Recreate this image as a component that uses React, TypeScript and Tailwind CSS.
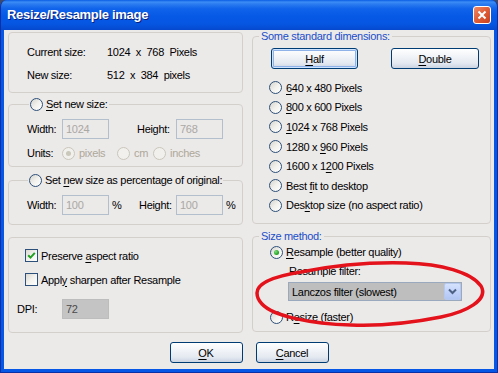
import React from "react";

type Kids = { children?: React.ReactNode };

function U({ children }: Kids) {
  return <span className="underline decoration-[1px] underline-offset-[2px]">{children}</span>;
}

function Radio({ checked = false, disabled = false }: { checked?: boolean; disabled?: boolean }) {
  return (
    <span
      className={
        disabled
          ? "inline-flex shrink-0 w-[13px] h-[13px] rounded-full border border-[#C9C7BA] bg-[#F1F0EC] items-center justify-center"
          : "inline-flex shrink-0 w-[13px] h-[13px] rounded-full border border-[#2C5079] bg-[linear-gradient(135deg,#D6D4CC_0%,#F2F1ED_50%,#FFFFFF_100%)] items-center justify-center"
      }
    >
      {checked && (
        <span
          className={
            disabled
              ? "w-[5px] h-[5px] rounded-full bg-[#CAC8BB]"
              : "w-[5px] h-[5px] rounded-full bg-[radial-gradient(circle_at_35%_35%,#7BDD7B_0%,#27A827_60%,#1A7E1A_100%)]"
          }
        />
      )}
    </span>
  );
}

function Check({ checked = false }: { checked?: boolean }) {
  return (
    <span className="inline-flex shrink-0 w-[13px] h-[13px] border border-[#2C5079] bg-[linear-gradient(135deg,#DAD8D0_0%,#F3F2EE_50%,#FFFFFF_100%)] items-center justify-center">
      {checked && (
        <svg width="9" height="9" viewBox="0 0 9 9">
          <path d="M1.2 4.2 L3.5 6.6 L7.8 1.8" fill="none" stroke="#21A121" strokeWidth="2" />
        </svg>
      )}
    </span>
  );
}

function Btn({ children, focused = false, className = "" }: Kids & { focused?: boolean; className?: string }) {
  return (
    <div
      className={`h-[21px] shrink-0 rounded-[3px] border border-[#003C74] bg-[linear-gradient(to_bottom,#FFFFFF_0%,#F4F6F9_30%,#E4E9F1_75%,#CBD4E2_100%)] flex items-center justify-center text-black ${
        focused ? "shadow-[inset_0_0_0_1px_#CEE3FF,inset_0_0_0_2px_#8FB2E8]" : ""
      } ${className}`}
    >
      {children}
    </div>
  );
}

function Field({ value }: { value: string }) {
  return (
    <div className="w-[47px] h-[20px] shrink-0 border border-[#B3BFCD] bg-[#ECE9E9] text-[#A9A8A3] pl-[3px] flex items-center">
      {value}
    </div>
  );
}

function LeftCol() {
  return (
    <div className="w-[235px] shrink-0 flex flex-col">
      <div className="mt-[2px] h-[61px] border border-[#D3D0CC] rounded-[4px] pl-[18px] pt-[12px] flex flex-col gap-[9px]">
        <div className="flex h-[14px] items-center">
          <span className="w-[80px]">Current size:</span>
          <span className="whitespace-pre">1024  x  768  Pixels</span>
        </div>
        <div className="flex h-[14px] items-center">
          <span className="w-[80px]">New size:</span>
          <span className="whitespace-pre">512  x  384  pixels</span>
        </div>
      </div>

      <fieldset className="mt-[4px] border border-[#D3D0CC] rounded-[4px]">
        <legend className="ml-[20px] px-[1px]">
          <span className="flex items-center h-[14px] gap-[3px]">
            <Radio />
            <span>
              <U>S</U>et new size:
            </span>
          </span>
        </legend>
        <div className="pt-[8px] pb-[6px] flex flex-col">
          <div className="flex items-center h-[20px]">
            <span className="ml-[18px] w-[35px]">Width:</span>
            <Field value="1024" />
            <span className="ml-[28px] w-[39px]">Height:</span>
            <Field value="768" />
          </div>
          <div className="flex items-center h-[14px] mt-[7px]">
            <span className="ml-[18px] w-[35px]">Units:</span>
            <span className="flex items-center w-[55px] text-[#ACA899]">
              <Radio checked disabled />
              <span className="ml-[4px]">pixels</span>
            </span>
            <span className="flex items-center w-[36px] text-[#ACA899]">
              <Radio disabled />
              <span className="ml-[4px]">cm</span>
            </span>
            <span className="flex items-center text-[#ACA899]">
              <Radio disabled />
              <span className="ml-[4px]">inches</span>
            </span>
          </div>
        </div>
      </fieldset>

      <fieldset className="mt-[6px] border border-[#D3D0CC] rounded-[4px]">
        <legend className="ml-[19px] px-[1px]">
          <span className="flex items-center h-[14px] gap-[3px]">
            <Radio />
            <span>
              Set <U>n</U>ew size as percentage of original:
            </span>
          </span>
        </legend>
        <div className="pt-[8px] pb-[9px]">
          <div className="flex items-center h-[20px]">
            <span className="ml-[18px] w-[35px]">Width:</span>
            <Field value="100" />
            <span className="ml-[3px] w-[8px]">%</span>
            <span className="ml-[19px] w-[37px]">Height:</span>
            <Field value="100" />
            <span className="ml-[3px]">%</span>
          </div>
        </div>
      </fieldset>

      <div className="mt-[12px] border border-[#D3D0CC] rounded-[4px] pt-[11px] pb-[13px] flex flex-col">
        <div className="flex items-center h-[13px] ml-[16px]">
          <Check checked />
          <span className="ml-[3px]">
            Preserve <U>a</U>spect ratio
          </span>
        </div>
        <div className="flex items-center h-[13px] ml-[16px] mt-[11px]">
          <Check />
          <span className="ml-[3px]">
            Appl<U>y</U> sharpen after Resample
          </span>
        </div>
        <div className="flex items-center h-[20px] mt-[13px] ml-[8px]">
          <span className="w-[45px]">DPI:</span>
          <div className="w-[47px] h-[20px] border border-[#BDBDBD] bg-[#C4C4C4] text-[#4A4A4A] pl-[3px] flex items-center">
            72
          </div>
        </div>
      </div>
    </div>
  );
}

const sizes: React.ReactNode[] = [
  <>
    <U>6</U>40 x 480 Pixels
  </>,
  <>
    <U>8</U>00 x 600 Pixels
  </>,
  <>
    <U>1</U>024 x 768 Pixels
  </>,
  <>
    1280 x <U>9</U>60 Pixels
  </>,
  <>
    1600 x 1<U>2</U>00 Pixels
  </>,
  <>
    Best <U>f</U>it to desktop
  </>,
  <>
    Des<U>k</U>top size (no aspect ratio)
  </>,
];

function RightCol() {
  return (
    <div className="w-[239px] shrink-0 flex flex-col">
      <fieldset className="border border-[#D3D0CC] rounded-[4px]">
        <legend className="ml-[6px] px-[2px] text-[#1A4FC8] leading-[13px]">Some standard dimensions:</legend>
        <div className="pt-[5px] pb-[8px]">
          <div className="flex h-[21px]">
            <Btn focused className="ml-[18px] w-[87px]">
              <U>H</U>alf
            </Btn>
            <Btn className="ml-[33px] w-[88px]">
              <U>D</U>ouble
            </Btn>
          </div>
          <div className="mt-[9px] ml-[16px] flex flex-col">
            {sizes.map((s, i) => (
              <div key={i} className="h-[19.6px] flex items-center">
                <Radio />
                <span className="ml-[4px]">{s}</span>
              </div>
            ))}
          </div>
        </div>
      </fieldset>

      <fieldset className="mt-[6px] border border-[#D3D0CC] rounded-[4px]">
        <legend className="ml-[6px] px-[2px] text-[#1A4FC8] leading-[13px]">Size method:</legend>
        <div className="pt-[2px] pb-[7px] flex flex-col">
          <div className="flex items-center h-[14px] ml-[17px]">
            <Radio checked />
            <span className="ml-[3px]">
              <U>R</U>esample (better quality)
            </span>
          </div>
          <div className="h-[14px] mt-[5px] ml-[36px] flex items-center">Resample filter:</div>
          <div className="mt-[4px] ml-[35px] w-[174px] h-[19px] border border-[#9AA9BD] bg-[#BEBEBE] flex items-center">
            <span className="pl-[3px] flex-1 text-black">Lanczos filter (slowest)</span>
            <div className="w-[17px] h-[17px] rounded-[2px] border border-[#B5C8F0] bg-[linear-gradient(to_bottom,#D6E2FD_0%,#C2D3FA_50%,#B2C6F4_100%)] flex items-center justify-center">
              <svg width="9" height="7" viewBox="0 0 9 7">
                <path d="M1 1.5 L4.5 5 L8 1.5" fill="none" stroke="#4D6185" strokeWidth="2" />
              </svg>
            </div>
          </div>
          <div className="flex items-center h-[14px] mt-[9px] ml-[17px]">
            <Radio />
            <span className="ml-[3px]">
              R<U>e</U>size (faster)
            </span>
          </div>
        </div>
      </fieldset>
    </div>
  );
}

export default function App() {
  return (
    <div className="w-[498px] h-[373px] bg-[#3A4A70] font-['Liberation_Sans',Arial,sans-serif] text-[11px] leading-[14px] tracking-[-0.3px] text-black">
      <div className="relative w-full h-full flex flex-col rounded-t-[7px] overflow-hidden bg-[#0657E6] border-x border-b border-[#0B30A6]">
        <div className="h-[30px] shrink-0 flex items-center pl-[6px] pr-[6px] bg-[linear-gradient(to_bottom,#0A5DE5_0%,#3D8DF5_7%,#2A7AF1_14%,#0F62EA_30%,#0659E5_55%,#0656E2_80%,#0548CE_100%)]">
          <span className="text-white font-bold text-[13px] tracking-[-0.3px] [text-shadow:1px_1px_0_#0A1E7A]">
            Resize/Resample image
          </span>
          <div className="ml-auto w-[18px] h-[18px] rounded-[3px] border border-white bg-[linear-gradient(135deg,#F08A66_0%,#E0603A_45%,#C8401C_100%)] flex items-center justify-center">
            <svg width="10" height="10" viewBox="0 0 10 10">
              <path d="M1.5 1.5 L8.5 8.5 M8.5 1.5 L1.5 8.5" stroke="white" strokeWidth="2" />
            </svg>
          </div>
        </div>
        <div className="flex-1 mx-[3px] mb-[3px] bg-[#ECE9E9] flex flex-col">
          <div className="flex items-start px-[4px] gap-[9px]">
            <LeftCol />
            <RightCol />
          </div>
          <div className="flex justify-center gap-[13px] mt-[9px]">
            <Btn className="w-[73px]">
              <U>O</U>K
            </Btn>
            <Btn className="w-[73px]">
              <U>C</U>ancel
            </Btn>
          </div>
        </div>
        <svg className="absolute left-0 top-0 pointer-events-none" width="498" height="373">
          <path
            d="M 256 293 C 256 282, 275 276, 300 272 C 330 266, 370 262, 405 263 C 440 264, 470 272, 480 286 C 488 300, 465 312, 440 317 C 410 323, 375 326, 350 325 C 310 324, 272 316, 261 304 C 257 300, 256 296, 256 293 Z"
            fill="none"
            stroke="#E3121B"
            strokeWidth="3.5"
            strokeLinejoin="round"
          />
        </svg>
      </div>
    </div>
  );
}
